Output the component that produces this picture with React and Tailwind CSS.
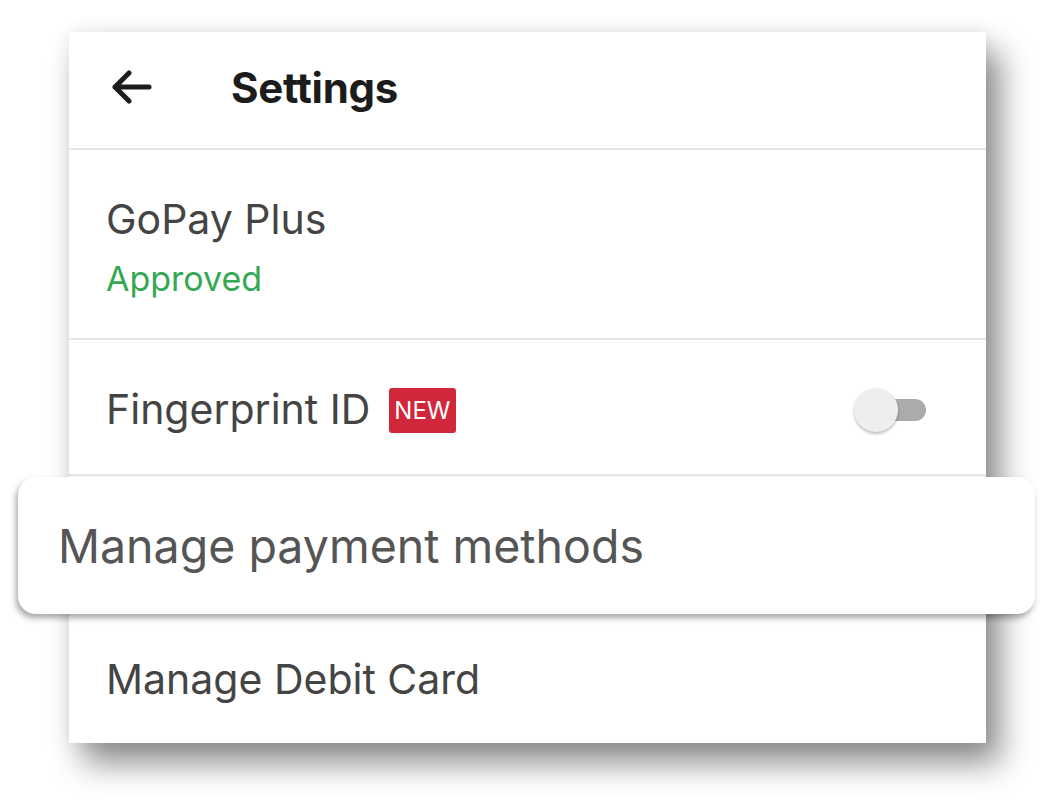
export default function App() {
  const font = { fontFamily: 'Inter, Roboto, sans-serif' };
  return (
    <div className="relative w-[1052px] h-[809px] bg-white overflow-hidden" style={font}>
      <div className="pt-[32px] pl-[69px]">
        <div className="w-[917px] h-[711px] bg-white flex flex-col shadow-[14px_20px_30px_rgba(0,0,0,0.45),0_0_16px_rgba(0,0,0,0.08)]">
          <div className="h-[118px] shrink-0 flex items-center pb-[6px] border-b-2 border-[#e6e6e6]">
            <svg width="40" height="34" viewBox="0 0 40 34" className="ml-[43px]">
              <path d="M3 17 H37 M17 3 L3 17 L17 31" fill="none" stroke="#1c1c1c" strokeWidth="5" strokeLinecap="round" strokeLinejoin="round" />
            </svg>
            <span className="ml-[79px] text-[42px] font-bold text-[#1c1c1c] tracking-[-0.3px]">Settings</span>
          </div>
          <div className="h-[190px] shrink-0 border-b-2 border-[#e6e6e6] pl-[37px] pt-[47px]">
            <div className="text-[41px] leading-[44px] text-[#444]">GoPay Plus</div>
            <div className="mt-[20px] text-[34px] leading-[36px] text-[#34a853]">Approved</div>
          </div>
          <div className="h-[136px] shrink-0 border-b-2 border-[#e6e6e6] pl-[37px] pr-[60px] pt-[6px] flex items-center">
            <span className="text-[41px] text-[#444]">Fingerprint ID</span>
            <span className="ml-[19px] bg-[#d0273a] text-white text-[24px] leading-[45px] h-[45px] px-[5px] rounded-[3px]">NEW</span>
            <div className="ml-auto relative w-[72px] h-[46px] flex items-center">
              <div className="absolute right-0 w-[44px] h-[22px] rounded-full bg-[#ababab]"></div>
              <div className="absolute left-0 w-[44px] h-[44px] rounded-full bg-[#eeeeee] shadow-[0_2px_3px_rgba(0,0,0,0.25)]"></div>
            </div>
          </div>
          <div className="h-[136px] shrink-0"></div>
          <div className="flex-1 pl-[37px] pt-[4px] flex items-center">
            <span className="text-[41px] text-[#444]">Manage Debit Card</span>
          </div>
        </div>
      </div>
      <div className="absolute left-[18px] top-[477px] w-[1017px] h-[137px] bg-white rounded-[18px] flex items-center pl-[40px] pt-[2px] shadow-[-2px_4px_6px_rgba(0,0,0,0.35)]">
        <span className="text-[46.5px] text-[#555]">Manage payment methods</span>
      </div>
    </div>
  );
}
